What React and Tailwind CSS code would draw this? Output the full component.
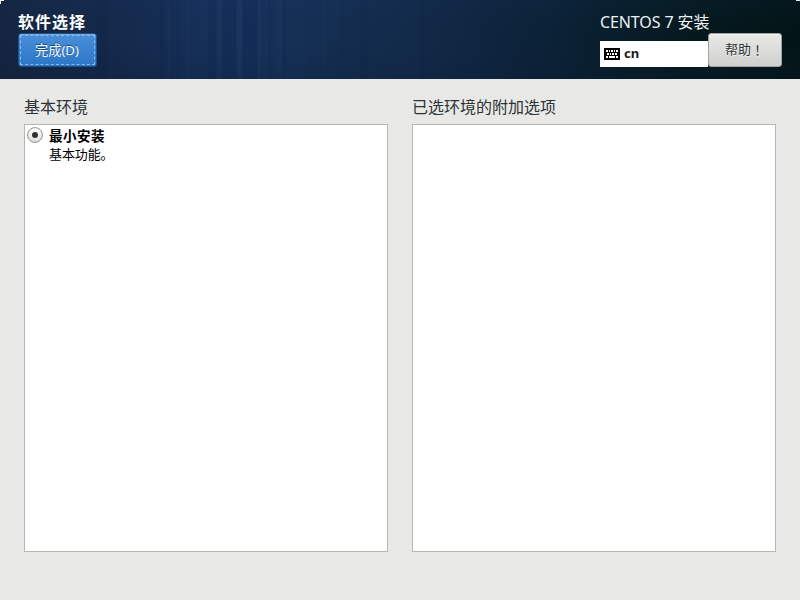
const stripes = [
  [96, 10, '#0f2345', 0.2],
  [160, 4, '#0d2145', 0.28],
  [168, 2, '#2b4a80', 0.15],
  [176, 4, '#0d2145', 0.22],
  [186, 3, '#25457a', 0.15],
  [208, 8, '#0d2347', 0.25],
  [217, 5, '#294a80', 0.18],
  [223, 13, '#0b2350', 0.3],
  [237, 5, '#2d4f88', 0.25],
  [243, 14, '#0c2552', 0.3],
  [258, 3, '#2c4d82', 0.2],
  [268, 3, '#0d2549', 0.22],
  [277, 4, '#294a7c', 0.13],
  [283, 3, '#0b2347', 0.22],
  [310, 3, '#0f2a4e', 0.25],
  [323, 2, '#24466f', 0.16],
  [341, 3, '#0f2a4c', 0.2],
  [360, 8, '#0b2442', 0.15],
  [420, 4, '#0b2145', 0.15],
];

function HeaderBackdrop() {
  return (
    <svg className="absolute inset-0 h-full w-full" viewBox="0 0 800 79" preserveAspectRatio="none" aria-hidden="true">
      <defs>
        <linearGradient id="base" x1="0" x2="1" y1="0" y2="0">
          <stop offset="0" stopColor="#14253f" />
          <stop offset="0.14" stopColor="#15294b" />
          <stop offset="0.25" stopColor="#163058" />
          <stop offset="0.34" stopColor="#163158" />
          <stop offset="0.42" stopColor="#142e50" />
          <stop offset="0.5" stopColor="#132b4b" />
          <stop offset="0.58" stopColor="#102642" />
          <stop offset="0.68" stopColor="#0c2237" />
          <stop offset="0.75" stopColor="#091e2d" />
          <stop offset="0.86" stopColor="#06191f" />
          <stop offset="1" stopColor="#031416" />
        </linearGradient>
        <linearGradient id="shade" x1="0" x2="0" y1="0" y2="1">
          <stop offset="0" stopColor="#1d4580" stopOpacity="0.08" />
          <stop offset="0.5" stopColor="#10203c" stopOpacity="0" />
          <stop offset="1" stopColor="#081a34" stopOpacity="0.22" />
        </linearGradient>
      </defs>
      <rect width="800" height="79" fill="url(#base)" />
      <g opacity="0.75">
        {stripes.map(([x, w, fill, opacity]) => (
          <rect key={x} x={x} width={w} height="79" fill={fill} opacity={opacity} />
        ))}
      </g>
      <rect width="800" height="79" fill="url(#shade)" />
      <path d="M0 0h4v1H1v3H0z M796 0h4v1h-4z" fill="#e8e8e6" />
    </svg>
  );
}

function KeyboardIcon() {
  return (
    <svg width="16" height="12" viewBox="0 0 16 12" shapeRendering="crispEdges" aria-hidden="true">
      <rect width="16" height="12" rx="1" fill="#000" />
      <path
        fill="#fff"
        d="M2 2h2v2H2z M5 2h1v2H5z M7 2h2v2H7z M10 2h1v2h-1z M12 2h2v2h-2z M3 5h2v2H3z M6 5h1v2H6z M8 5h2v2H8z M11 5h2v2h-2z M2 8h2v2H2z M5 8h6v2H5z M12 8h2v2h-2z"
      />
    </svg>
  );
}

function Panel({ title, children }) {
  return (
    <section className="flex w-[364px] flex-col">
      <h2 className="h-[35px] pt-[6px] text-[16px] leading-[24px] text-[#2e3436]">{title}</h2>
      <div className="h-[428px] border border-[#b6b6b3] bg-white">{children}</div>
    </section>
  );
}

export default function App() {
  return (
    <div className="h-[600px] w-[800px] overflow-hidden bg-[#e8e8e6] font-['Noto_Sans','Noto_Sans_CJK_SC',sans-serif] text-[13px]">
      <header className="relative h-[79px]">
        <HeaderBackdrop />
        <div className="relative flex h-full justify-between px-[18px] pt-[10px]">
          <div className="flex flex-col items-start">
            <h1 className="h-[23px] text-[16px] leading-[24px] font-bold tracking-[1px] text-white">软件选择</h1>
            <button className="h-[34px] w-[79px] rounded-[3px] border border-[#1c5187] bg-linear-to-b from-[#4a90d9] to-[#2a76c6] p-px shadow-[inset_0_1px_0_#76aae0]">
              <span className="flex h-full items-center justify-center rounded-[1px] border border-dashed border-[#8db9e8] pt-[2px] pr-px text-[13.2px] text-[#f4f8fc] [text-shadow:0_-1px_#1f4e7e]">
                完成(D)
              </span>
            </button>
          </div>
          <div className="flex w-[182px] flex-col">
            <div className="h-[23px] text-[16px] leading-[25px] tracking-[-0.1px] whitespace-nowrap text-[#eef1f3]">CENTOS 7 安装</div>
            <div className="flex items-end">
              <div className="flex h-[26px] w-[108px] items-center gap-1 bg-white pl-1">
                <KeyboardIcon />
                <span className="pb-[2px] text-[13px] leading-[20px] font-bold text-[#1a1a1a]">cn</span>
              </div>
              <button className="flex h-[34px] w-[74px] items-center justify-center rounded-[3px] border border-[#a3a3a0] bg-linear-to-b from-[#e9e9e8] to-[#cfcfcd] pr-px pb-px text-[13px] text-[#2e3436] shadow-[inset_0_1px_0_#f5f5f4] [text-shadow:0_1px_#f4f4f4]">
                帮助<span className="font-['Noto_Sans_CJK_TC',sans-serif]" lang="zh-TW">！</span>
              </button>
            </div>
          </div>
        </div>
      </header>
      <main className="flex gap-6 px-6 pt-[10px]">
        <Panel title="基本环境">
          <div className="flex gap-[6px] pt-[2px] pl-[2px]">
            <svg width="16" height="16" viewBox="0 0 16 16" aria-hidden="true">
              <defs>
                <linearGradient id="radio" x1="0" x2="0" y1="0" y2="1">
                  <stop offset="0" stopColor="#ffffff" />
                  <stop offset="1" stopColor="#dededc" />
                </linearGradient>
              </defs>
              <circle cx="8" cy="8" r="7.4" fill="url(#radio)" stroke="#8f8f8c" />
              <circle cx="8" cy="8" r="3" fill="#2e3436" />
            </svg>
            <div className="text-[13px] leading-[18px] text-black">
              <div className="text-[13.5px] font-bold tracking-[0.5px]">最小安装</div>
              <div className="tracking-[-0.1px]">基本功能。</div>
            </div>
          </div>
        </Panel>
        <Panel title="已选环境的附加选项" />
      </main>
    </div>
  );
}
